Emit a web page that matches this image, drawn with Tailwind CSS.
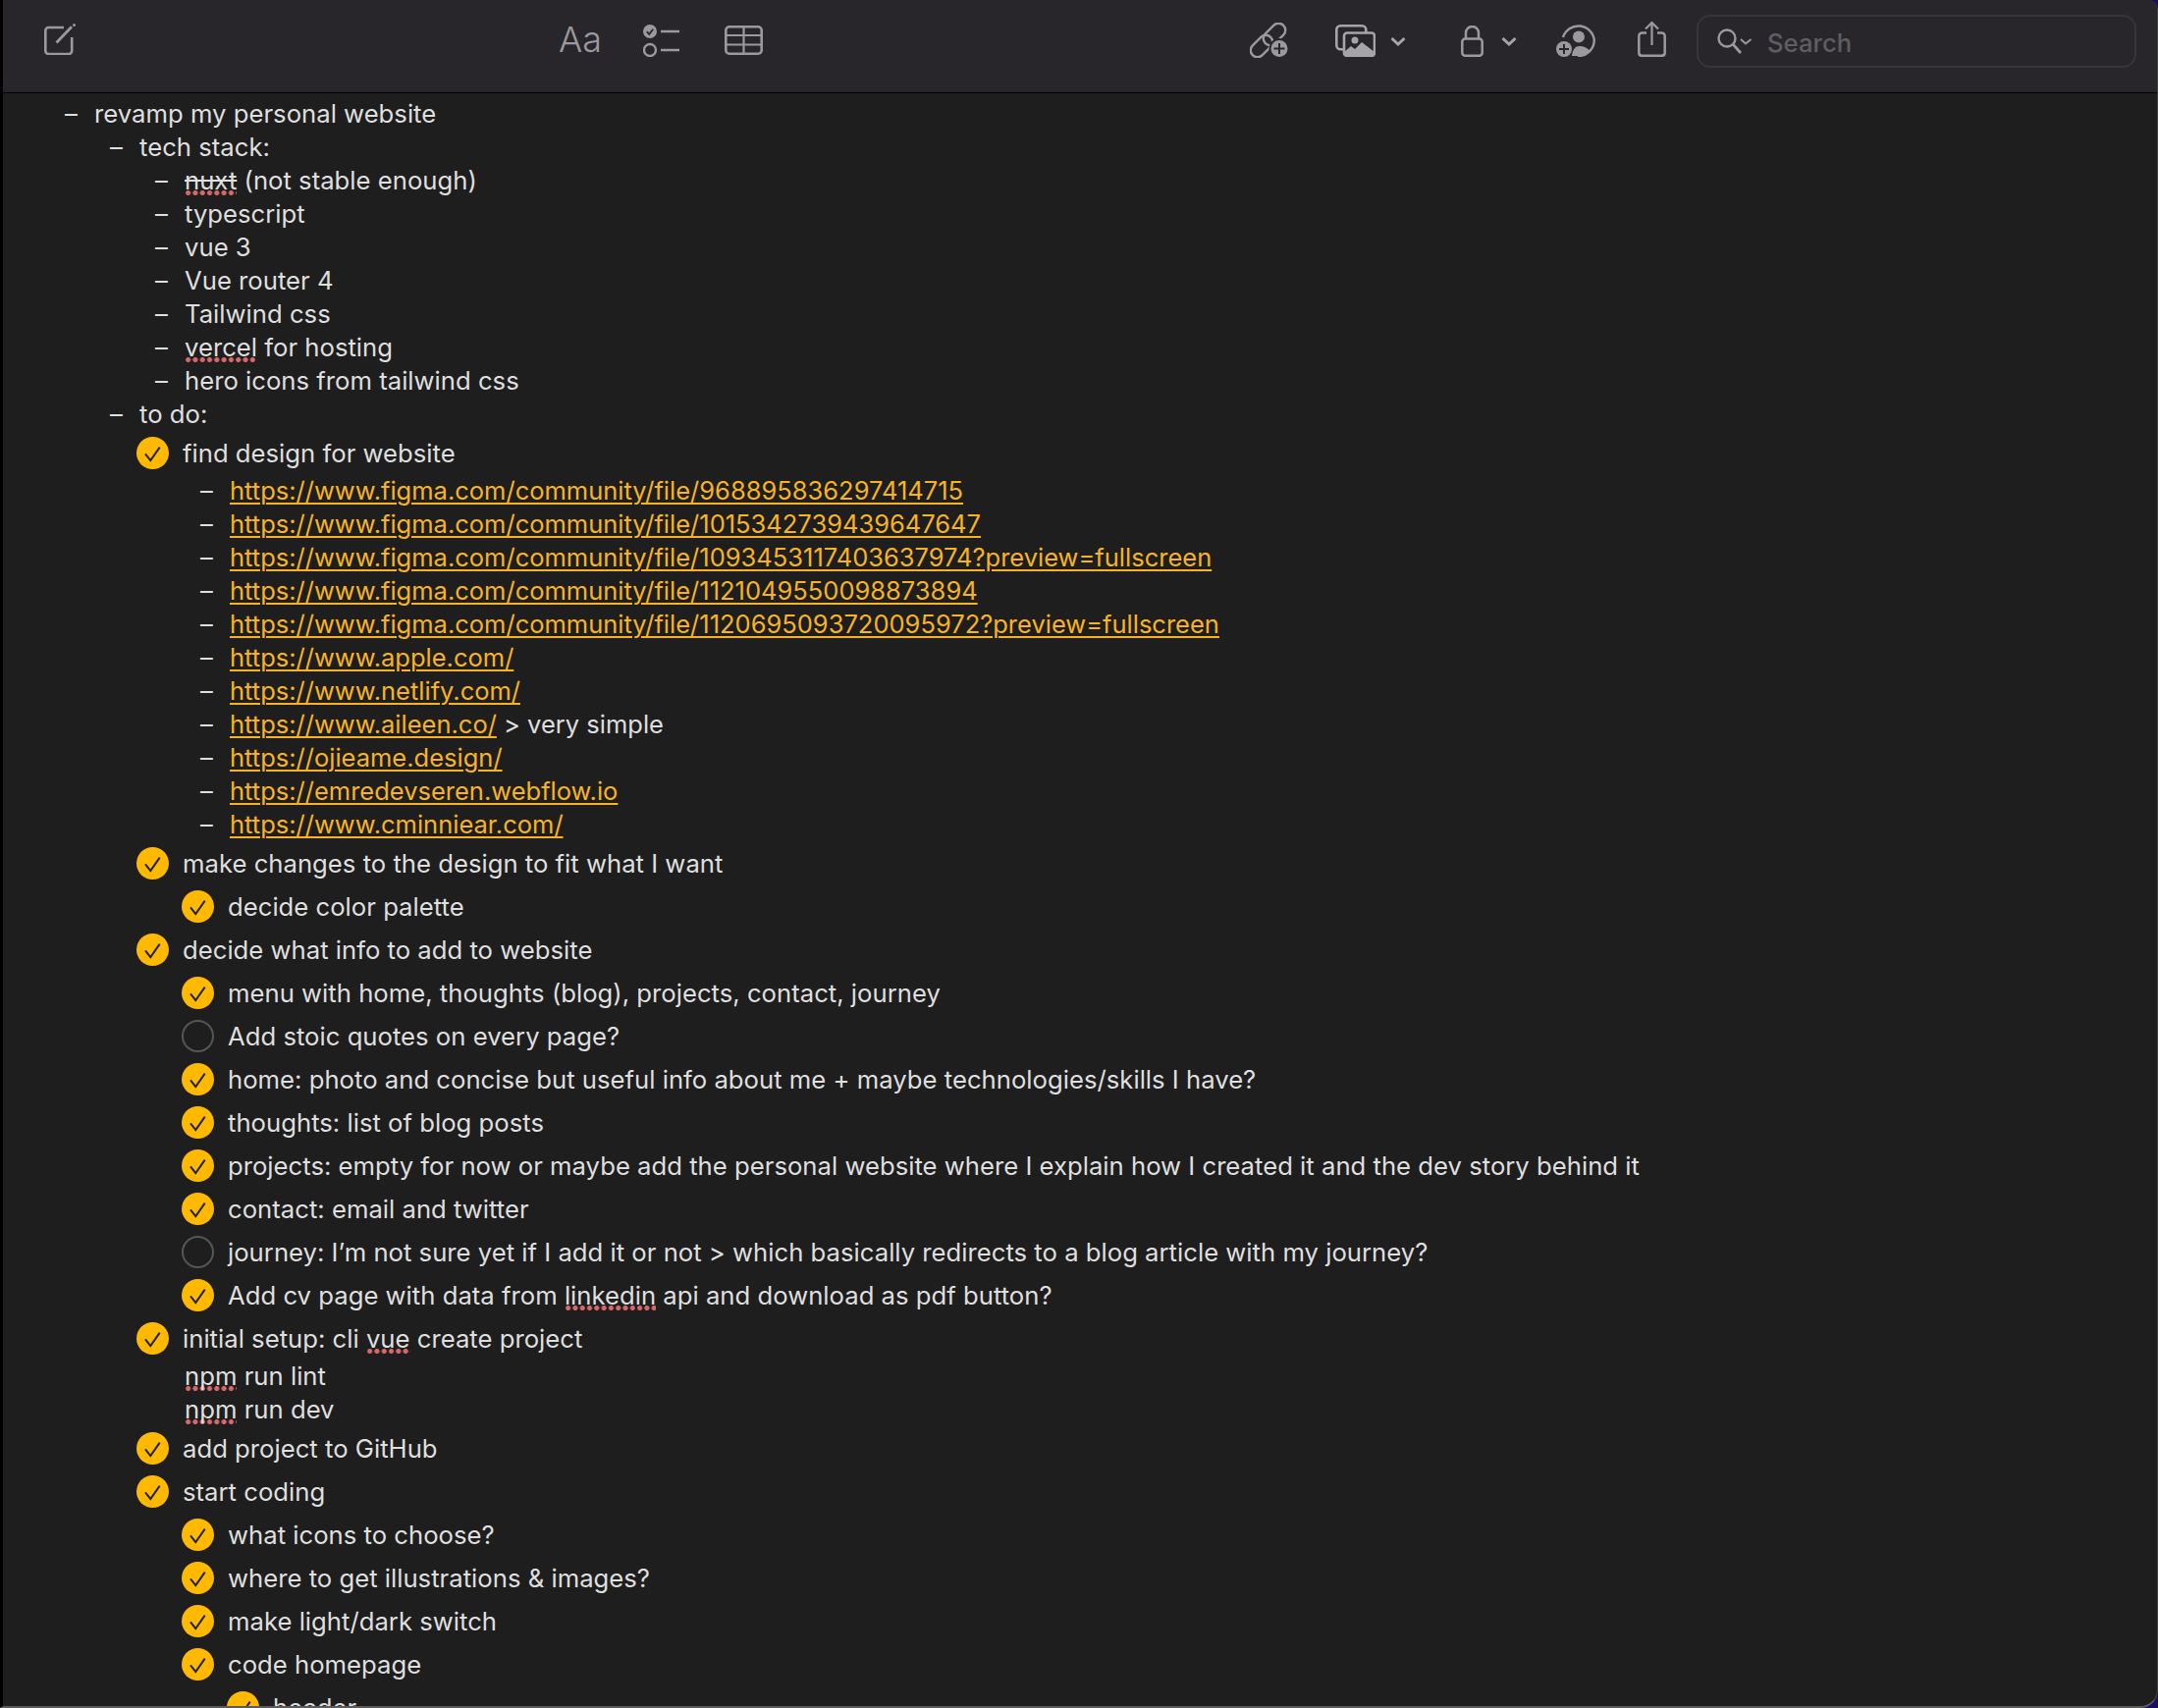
<!DOCTYPE html>
<html><head><meta charset="utf-8"><script src="https://cdn.jsdelivr.net/npm/@tailwindcss/browser@4"></script></head>
<body class="m-0 bg-[#1d0b6b]">
<div class="w-[2198px] h-[1740px] overflow-hidden rounded-br-[18px] rounded-tr-[10px] border-l-[3px] border-black border-b-2 border-b-[#5c5c5c] border-r border-r-[#444] bg-[#1e1e1e] font-['Inter',sans-serif] text-[25.7px] text-[#dfdfdf] antialiased">
<header class="flex items-start h-[95px] border-b border-black bg-[#29262b] text-[#9b999c]">
<svg class="ml-[42px] mt-[24px] shrink-0" width="32" height="32" viewBox="0 0 32 32" fill="none" stroke="#9b999c"><path d="M20 4H4.500A3.200 3.200 0 0 0 1.300 7.200V27.800A3.200 3.200 0 0 0 4.500 31H25A3.200 3.200 0 0 0 28.200 27.800V14" stroke-width="2.600"/><path d="M12.500 19.500 28 3.200" stroke-width="2.800"/><circle cx="30.500" cy="1.500" r="1.500" fill="#9b999c" stroke="none"/></svg>
<span class="ml-[492px] mt-[19px] w-[43px] text-[36px] leading-[42px] font-light whitespace-nowrap">Aa</span>
<svg class="ml-[43px] mt-[25px] shrink-0" width="37" height="33" viewBox="0 0 37 33" fill="none"><circle cx="7" cy="7" r="7" fill="#9b999c"/><path d="M3.800 7.200l2.400 2.600 4-5" stroke="#29262b" stroke-width="1.800"/><circle cx="7" cy="26" r="6" stroke="#9b999c" stroke-width="2.400"/><path d="M18 7h19M18 26h19" stroke="#9b999c" stroke-width="2.400"/></svg>
<svg class="ml-[46px] mt-[26px] shrink-0" width="39" height="30" viewBox="0 0 39 30" fill="none" stroke="#9b999c"><rect x="1.300" y="1.300" width="36.400" height="27.400" rx="3.500" stroke-width="2.600"/><path d="M1 10h37M1 19.500h37M19.500 1v28" stroke-width="2.200"/></svg>
<svg class="ml-[496px] mt-[23px] shrink-0" width="40" height="36" viewBox="0 0 40 36" fill="none"><rect x="-7" y="-13" width="14" height="26" rx="7" transform="translate(25 12) rotate(45)" stroke="#9b999c" stroke-width="2.400"/><rect x="-7" y="-13" width="14" height="26" rx="7" transform="translate(12 24) rotate(45)" stroke="#9b999c" stroke-width="2.400"/><circle cx="30" cy="26.500" r="10.500" fill="#29262b"/><circle cx="30" cy="26.500" r="8.500" fill="#9b999c"/><path d="M30 21v11M24.500 26.500h11" stroke="#29262b" stroke-width="2"/></svg>
<svg class="ml-[47px] mt-[25px] shrink-0" width="41" height="33" viewBox="0 0 41 33" fill="none"><rect x="1.300" y="1.300" width="30" height="24" rx="4" stroke="#a6a4a8" stroke-width="2.600"/><rect x="9" y="8.500" width="31" height="23.500" rx="3" fill="#29262b" stroke="#a6a4a8" stroke-width="2.600"/><path d="M9 32v-4l7-6 4 3 7-7 13 10v4z" fill="#a6a4a8"/><circle cx="20" cy="16" r="3.500" fill="#a6a4a8"/></svg>
<svg class="ml-[15px] mt-[37px] shrink-0" width="16" height="10" viewBox="0 0 16 10" fill="none" stroke="#a6a4a8" stroke-width="3"><path d="M1.500 2 8 8l6.500-6"/></svg>
<svg class="ml-[56px] mt-[26px] shrink-0" width="23" height="32" viewBox="0 0 23 32" fill="none" stroke="#9b999c" stroke-width="2.500"><rect x="1.300" y="13.500" width="20.400" height="17.300" rx="3"/><path d="M5 13.500V7.500a6.500 6.500 0 0 1 13 0v6"/></svg>
<svg class="ml-[18px] mt-[37px] shrink-0" width="16" height="10" viewBox="0 0 16 10" fill="none" stroke="#a6a4a8" stroke-width="3"><path d="M1.500 2 8 8l6.500-6"/></svg>
<svg class="ml-[40px] mt-[24px] shrink-0" width="40" height="34" viewBox="0 0 40 34" fill="none"><path d="M7 14A16.300 16.300 0 0 1 38.800 17 16.300 16.300 0 0 1 22 33" stroke="#9b999c" stroke-width="2.400"/><circle cx="23" cy="13.500" r="6" fill="#9b999c"/><path d="M16 33c.500-7 4-10 7.500-10s8 1 11 5c-3 3-7 5-11 5z" fill="#9b999c"/><circle cx="8" cy="26" r="8" fill="#9b999c"/><path d="M8 21v10M3 26h10" stroke="#29262b" stroke-width="2"/></svg>
<svg class="ml-[43px] mt-[21px] shrink-0" width="29" height="37" viewBox="0 0 29 37" fill="none" stroke="#9b999c" stroke-width="2.500"><path d="M9 12.500H4.500A3.200 3.200 0 0 0 1.300 15.700V32.800A3.200 3.200 0 0 0 4.500 35.800H24.500A3.200 3.200 0 0 0 27.700 32.800V15.700A3.200 3.200 0 0 0 24.500 12.500H20"/><path d="M14.500 25V2M8 8.500l6.500-6.500 6.500 6.500" stroke-width="2.200"/></svg>
<div class="ml-[31px] mt-[15px] flex items-center w-[448px] h-[54px] shrink-0 rounded-[14px] border-2 border-[#37353a]">
<svg class="ml-[19px] shrink-0" width="36" height="28" viewBox="0 0 36 28" fill="none" stroke="#9b999c"><circle cx="10" cy="11" r="8.500" stroke-width="2.400"/><path d="M16 17l8 9" stroke-width="2.800"/><path d="M24 12l5 4.500 5.500-4.500" stroke-width="2"/></svg>
<span class="ml-[15px] font-medium text-[#5f5d61] leading-none mt-[4px]">Search</span>
</div>
</header>
<main class="pt-[4px] whitespace-nowrap">
<div class="flex items-center h-[34px] pl-[63px]"><span class="w-[30px]">–</span><span>revamp my personal website</span></div>
<div class="flex items-center h-[34px] pl-[109px]"><span class="w-[30px]">–</span><span>tech stack:</span></div>
<div class="flex items-center h-[34px] pl-[155px]"><span class="w-[30px]">–</span><span class="whitespace-pre"><span class="line-through bg-[radial-gradient(circle,#d9686c_2.2px,transparent_2.8px)] bg-[length:7.3px_5px] bg-repeat-x bg-[position:0_100%]">nuxt</span> (not stable enough)</span></div>
<div class="flex items-center h-[34px] pl-[155px]"><span class="w-[30px]">–</span><span>typescript</span></div>
<div class="flex items-center h-[34px] pl-[155px]"><span class="w-[30px]">–</span><span>vue 3</span></div>
<div class="flex items-center h-[34px] pl-[155px]"><span class="w-[30px]">–</span><span>Vue router 4</span></div>
<div class="flex items-center h-[34px] pl-[155px]"><span class="w-[30px]">–</span><span>Tailwind css</span></div>
<div class="flex items-center h-[34px] pl-[155px]"><span class="w-[30px]">–</span><span class="whitespace-pre"><span class="bg-[radial-gradient(circle,#d9686c_2.2px,transparent_2.8px)] bg-[length:7.3px_5px] bg-repeat-x bg-[position:0_100%]">vercel</span> for hosting</span></div>
<div class="flex items-center h-[34px] pl-[155px]"><span class="w-[30px]">–</span><span>hero icons from tailwind css</span></div>
<div class="flex items-center h-[34px] pl-[109px]"><span class="w-[30px]">–</span><span>to do:</span></div>

<div class="flex items-center h-[44px] pl-[136px] gap-[14px]"><svg class="shrink-0" width="33" height="33" viewBox="0 0 33 33"><circle cx="16.500" cy="16.500" r="16.500" fill="#ffb900"/><path d="M9 17.300l5.300 6.700 9.400-13.300" fill="none" stroke="#222" stroke-width="2"/></svg><span class="pt-[2px]">find design for website</span></div>

<div class="flex items-center h-[34px] pl-[201px] text-[25.5px]"><span class="w-[30px]">–</span><a class="text-[#f8b322] underline decoration-2 underline-offset-[3px]">https://www.figma.com/community/file/968895836297414715</a></div>
<div class="flex items-center h-[34px] pl-[201px] text-[25.5px]"><span class="w-[30px]">–</span><a class="text-[#f8b322] underline decoration-2 underline-offset-[3px]">https://www.figma.com/community/file/1015342739439647647</a></div>
<div class="flex items-center h-[34px] pl-[201px] text-[25.5px]"><span class="w-[30px]">–</span><a class="text-[#f8b322] underline decoration-2 underline-offset-[3px]">https://www.figma.com/community/file/1093453117403637974?preview=fullscreen</a></div>
<div class="flex items-center h-[34px] pl-[201px] text-[25.5px]"><span class="w-[30px]">–</span><a class="text-[#f8b322] underline decoration-2 underline-offset-[3px]">https://www.figma.com/community/file/1121049550098873894</a></div>
<div class="flex items-center h-[34px] pl-[201px] text-[25.5px]"><span class="w-[30px]">–</span><a class="text-[#f8b322] underline decoration-2 underline-offset-[3px]">https://www.figma.com/community/file/1120695093720095972?preview=fullscreen</a></div>
<div class="flex items-center h-[34px] pl-[201px] text-[25.5px]"><span class="w-[30px]">–</span><a class="text-[#f8b322] underline decoration-2 underline-offset-[3px]">https://www.apple.com/</a></div>
<div class="flex items-center h-[34px] pl-[201px] text-[25.5px]"><span class="w-[30px]">–</span><a class="text-[#f8b322] underline decoration-2 underline-offset-[3px]">https://www.netlify.com/</a></div>
<div class="flex items-center h-[34px] pl-[201px] text-[25.5px]"><span class="w-[30px]">–</span><span class="whitespace-pre"><a class="text-[#f8b322] underline decoration-2 underline-offset-[3px]">https://www.aileen.co/</a> &gt; very simple</span></div>
<div class="flex items-center h-[34px] pl-[201px] text-[25.5px]"><span class="w-[30px]">–</span><a class="text-[#f8b322] underline decoration-2 underline-offset-[3px]">https://ojieame.design/</a></div>
<div class="flex items-center h-[34px] pl-[201px] text-[25.5px]"><span class="w-[30px]">–</span><a class="text-[#f8b322] underline decoration-2 underline-offset-[3px]">https://emredevseren.webflow.io</a></div>
<div class="flex items-center h-[34px] pl-[201px] text-[25.5px]"><span class="w-[30px]">–</span><a class="text-[#f8b322] underline decoration-2 underline-offset-[3px]">https://www.cminniear.com/</a></div>

<div class="flex items-center h-[44px] pl-[136px] gap-[14px]"><svg class="shrink-0" width="33" height="33" viewBox="0 0 33 33"><circle cx="16.500" cy="16.500" r="16.500" fill="#ffb900"/><path d="M9 17.300l5.300 6.700 9.400-13.300" fill="none" stroke="#222" stroke-width="2"/></svg><span class="pt-[2px]">make changes to the design to fit what I want</span></div>
<div class="flex items-center h-[44px] pl-[182px] gap-[14px]"><svg class="shrink-0" width="33" height="33" viewBox="0 0 33 33"><circle cx="16.500" cy="16.500" r="16.500" fill="#ffb900"/><path d="M9 17.300l5.300 6.700 9.400-13.300" fill="none" stroke="#222" stroke-width="2"/></svg><span class="pt-[2px]">decide color palette</span></div>
<div class="flex items-center h-[44px] pl-[136px] gap-[14px]"><svg class="shrink-0" width="33" height="33" viewBox="0 0 33 33"><circle cx="16.500" cy="16.500" r="16.500" fill="#ffb900"/><path d="M9 17.300l5.300 6.700 9.400-13.300" fill="none" stroke="#222" stroke-width="2"/></svg><span class="pt-[2px]">decide what info to add to website</span></div>
<div class="flex items-center h-[44px] pl-[182px] gap-[14px]"><svg class="shrink-0" width="33" height="33" viewBox="0 0 33 33"><circle cx="16.500" cy="16.500" r="16.500" fill="#ffb900"/><path d="M9 17.300l5.300 6.700 9.400-13.300" fill="none" stroke="#222" stroke-width="2"/></svg><span class="pt-[2px]">menu with home, thoughts (blog), projects, contact, journey</span></div>
<div class="flex items-center h-[44px] pl-[182px] gap-[14px]"><svg class="shrink-0" width="33" height="33" viewBox="0 0 33 33"><circle cx="16.500" cy="16.500" r="15.500" fill="none" stroke="#555" stroke-width="2"/></svg><span class="pt-[2px]">Add stoic quotes on every page?</span></div>
<div class="flex items-center h-[44px] pl-[182px] gap-[14px]"><svg class="shrink-0" width="33" height="33" viewBox="0 0 33 33"><circle cx="16.500" cy="16.500" r="16.500" fill="#ffb900"/><path d="M9 17.300l5.300 6.700 9.400-13.300" fill="none" stroke="#222" stroke-width="2"/></svg><span class="pt-[2px]">home: photo and concise but useful info about me + maybe technologies/skills I have?</span></div>
<div class="flex items-center h-[44px] pl-[182px] gap-[14px]"><svg class="shrink-0" width="33" height="33" viewBox="0 0 33 33"><circle cx="16.500" cy="16.500" r="16.500" fill="#ffb900"/><path d="M9 17.300l5.300 6.700 9.400-13.300" fill="none" stroke="#222" stroke-width="2"/></svg><span class="pt-[2px]">thoughts: list of blog posts</span></div>
<div class="flex items-center h-[44px] pl-[182px] gap-[14px]"><svg class="shrink-0" width="33" height="33" viewBox="0 0 33 33"><circle cx="16.500" cy="16.500" r="16.500" fill="#ffb900"/><path d="M9 17.300l5.300 6.700 9.400-13.300" fill="none" stroke="#222" stroke-width="2"/></svg><span class="pt-[2px]">projects: empty for now or maybe add the personal website where I explain how I created it and the dev story behind it</span></div>
<div class="flex items-center h-[44px] pl-[182px] gap-[14px]"><svg class="shrink-0" width="33" height="33" viewBox="0 0 33 33"><circle cx="16.500" cy="16.500" r="16.500" fill="#ffb900"/><path d="M9 17.300l5.300 6.700 9.400-13.300" fill="none" stroke="#222" stroke-width="2"/></svg><span class="pt-[2px]">contact: email and twitter</span></div>
<div class="flex items-center h-[44px] pl-[182px] gap-[14px]"><svg class="shrink-0" width="33" height="33" viewBox="0 0 33 33"><circle cx="16.500" cy="16.500" r="15.500" fill="none" stroke="#555" stroke-width="2"/></svg><span class="pt-[2px]">journey: I’m not sure yet if I add it or not &gt; which basically redirects to a blog article with my journey?</span></div>
<div class="flex items-center h-[44px] pl-[182px] gap-[14px]"><svg class="shrink-0" width="33" height="33" viewBox="0 0 33 33"><circle cx="16.500" cy="16.500" r="16.500" fill="#ffb900"/><path d="M9 17.300l5.300 6.700 9.400-13.300" fill="none" stroke="#222" stroke-width="2"/></svg><span class="pt-[2px] whitespace-pre">Add cv page with data from <span class="bg-[radial-gradient(circle,#d9686c_2.2px,transparent_2.8px)] bg-[length:7.3px_5px] bg-repeat-x bg-[position:0_100%]">linkedin</span> api and download as pdf button?</span></div>
<div class="flex items-center h-[44px] pl-[136px] gap-[14px]"><svg class="shrink-0" width="33" height="33" viewBox="0 0 33 33"><circle cx="16.500" cy="16.500" r="16.500" fill="#ffb900"/><path d="M9 17.300l5.300 6.700 9.400-13.300" fill="none" stroke="#222" stroke-width="2"/></svg><span class="pt-[2px] whitespace-pre">initial setup: cli <span class="bg-[radial-gradient(circle,#d9686c_2.2px,transparent_2.8px)] bg-[length:7.3px_5px] bg-repeat-x bg-[position:0_100%]">vue</span> create project</span></div>
<div class="flex items-center h-[34px] pl-[185px]"><span class="whitespace-pre"><span class="bg-[radial-gradient(circle,#d9686c_2.2px,transparent_2.8px)] bg-[length:7.3px_5px] bg-repeat-x bg-[position:0_100%]">npm</span> run lint</span></div>
<div class="flex items-center h-[34px] pl-[185px]"><span class="whitespace-pre"><span class="bg-[radial-gradient(circle,#d9686c_2.2px,transparent_2.8px)] bg-[length:7.3px_5px] bg-repeat-x bg-[position:0_100%]">npm</span> run dev</span></div>
<div class="flex items-center h-[44px] pl-[136px] gap-[14px]"><svg class="shrink-0" width="33" height="33" viewBox="0 0 33 33"><circle cx="16.500" cy="16.500" r="16.500" fill="#ffb900"/><path d="M9 17.300l5.300 6.700 9.400-13.300" fill="none" stroke="#222" stroke-width="2"/></svg><span class="pt-[2px]">add project to GitHub</span></div>
<div class="flex items-center h-[44px] pl-[136px] gap-[14px]"><svg class="shrink-0" width="33" height="33" viewBox="0 0 33 33"><circle cx="16.500" cy="16.500" r="16.500" fill="#ffb900"/><path d="M9 17.300l5.300 6.700 9.400-13.300" fill="none" stroke="#222" stroke-width="2"/></svg><span class="pt-[2px]">start coding</span></div>
<div class="flex items-center h-[44px] pl-[182px] gap-[14px]"><svg class="shrink-0" width="33" height="33" viewBox="0 0 33 33"><circle cx="16.500" cy="16.500" r="16.500" fill="#ffb900"/><path d="M9 17.300l5.300 6.700 9.400-13.300" fill="none" stroke="#222" stroke-width="2"/></svg><span class="pt-[2px]">what icons to choose?</span></div>
<div class="flex items-center h-[44px] pl-[182px] gap-[14px]"><svg class="shrink-0" width="33" height="33" viewBox="0 0 33 33"><circle cx="16.500" cy="16.500" r="16.500" fill="#ffb900"/><path d="M9 17.300l5.300 6.700 9.400-13.300" fill="none" stroke="#222" stroke-width="2"/></svg><span class="pt-[2px]">where to get illustrations &amp; images?</span></div>
<div class="flex items-center h-[44px] pl-[182px] gap-[14px]"><svg class="shrink-0" width="33" height="33" viewBox="0 0 33 33"><circle cx="16.500" cy="16.500" r="16.500" fill="#ffb900"/><path d="M9 17.300l5.300 6.700 9.400-13.300" fill="none" stroke="#222" stroke-width="2"/></svg><span class="pt-[2px]">make light/dark switch</span></div>
<div class="flex items-center h-[44px] pl-[182px] gap-[14px]"><svg class="shrink-0" width="33" height="33" viewBox="0 0 33 33"><circle cx="16.500" cy="16.500" r="16.500" fill="#ffb900"/><path d="M9 17.300l5.300 6.700 9.400-13.300" fill="none" stroke="#222" stroke-width="2"/></svg><span class="pt-[2px]">code homepage</span></div>
<div class="flex items-center h-[44px] pl-[228px] gap-[14px]"><svg class="shrink-0" width="33" height="33" viewBox="0 0 33 33"><circle cx="16.500" cy="16.500" r="16.500" fill="#ffb900"/><path d="M9 17.300l5.300 6.700 9.400-13.300" fill="none" stroke="#222" stroke-width="2"/></svg><span class="pt-[2px]">header</span></div>
</main>
</div>
</body></html>
